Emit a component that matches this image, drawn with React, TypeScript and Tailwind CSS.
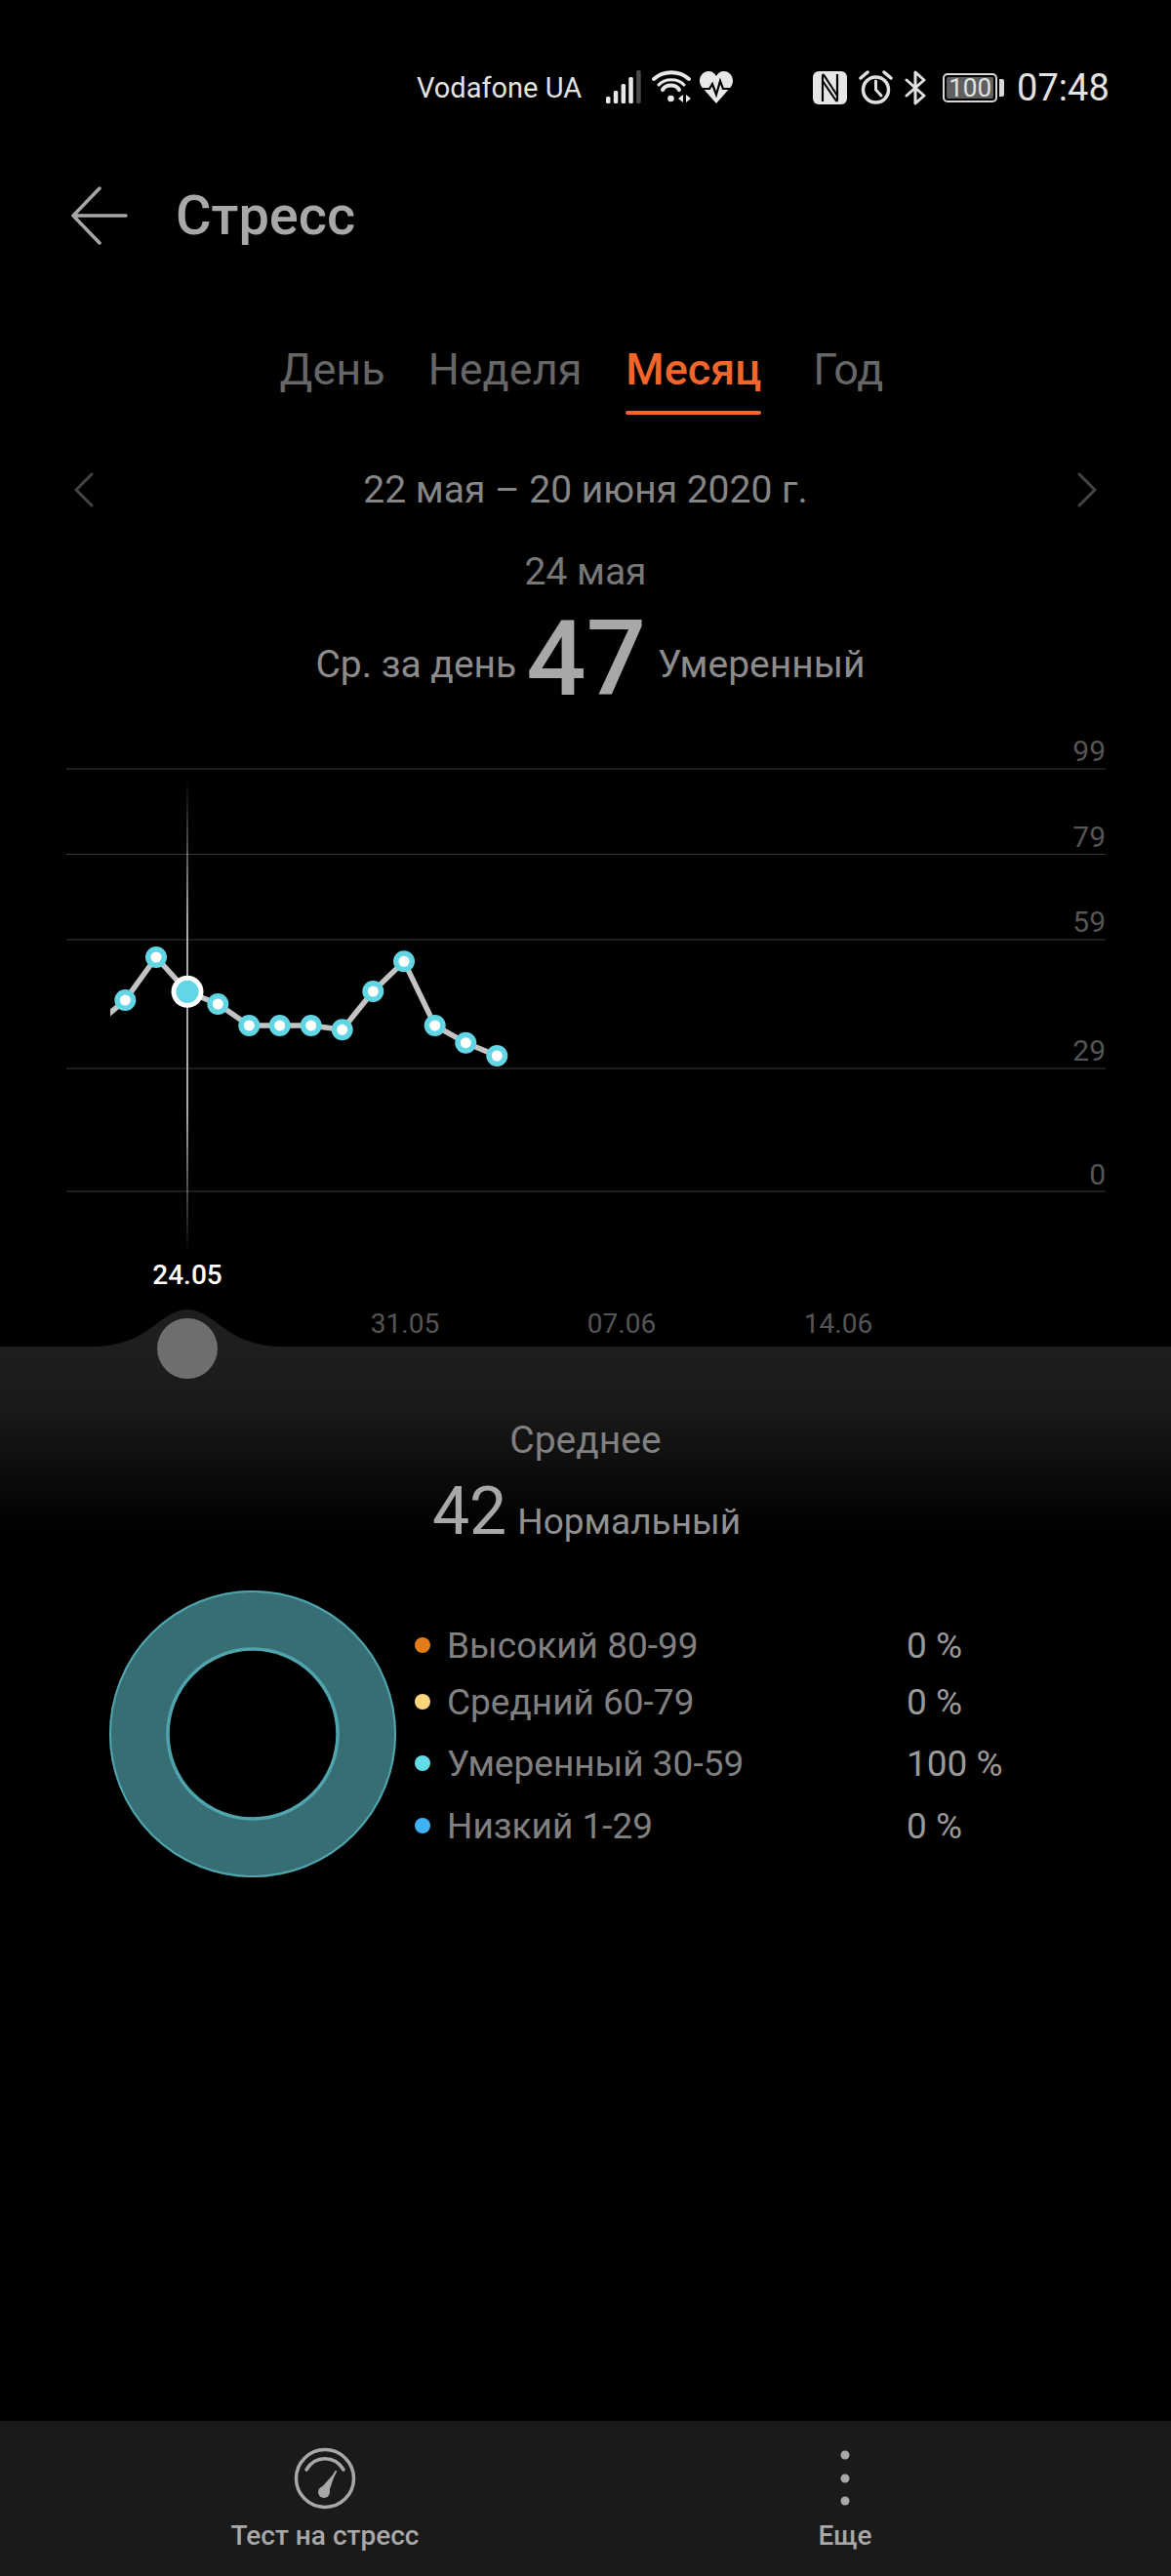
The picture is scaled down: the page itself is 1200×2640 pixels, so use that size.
const points: [number, number][] = [
  [128.3, 1025], [160, 981], [192, 1016.3], [223.3, 1029], [255.3, 1051], [286.7, 1051], [318.7, 1051],
  [350.7, 1055.3], [382.3, 1016], [414, 985.3], [445.7, 1051], [477.3, 1068.7], [509.3, 1082],
];

const gridLines: { y: number; label: string; labelY: number }[] = [
  { y: 788, label: "99", labelY: 780 },
  { y: 875.5, label: "79", labelY: 868 },
  { y: 963, label: "59", labelY: 955 },
  { y: 1095, label: "29", labelY: 1087 },
  { y: 1221, label: "0", labelY: 1214 },
];

const legend = [
  { name: "Высокий 80-99", value: "0 %", dot: "bg-[#e47d17]", row: "h-[54px]" },
  { name: "Средний 60-79", value: "0 %", dot: "bg-[#ffd67c]", row: "h-[62px]" },
  { name: "Умеренный 30-59", value: "100 %", dot: "bg-[#62dce8]", row: "h-[64px]" },
  { name: "Низкий 1-29", value: "0 %", dot: "bg-[#3db3f5]", row: "h-[64px]" },
];

function StatusIcons() {
  return (
    <div className="flex items-center">
      <svg width="37" height="36" viewBox="0 0 37 36" className="ml-[24px]" fill="#e8e8e8">
        <rect x="1" y="27" width="4.500" height="7" rx="1.500" />
        <rect x="8.800" y="21" width="4.500" height="13" rx="1.500" />
        <rect x="16.600" y="14" width="4.500" height="20" rx="1.500" />
        <rect x="24.300" y="7" width="4.500" height="27" rx="1.500" />
        <rect x="32.200" y="0" width="4.500" height="34" rx="1.500" fill="#4a4a4a" />
      </svg>
      <svg width="42" height="36" viewBox="0 0 42 36" className="ml-[10px]" fill="none" stroke="#e8e8e8" strokeLinecap="round">
        <path d="M3 9C13 0 29 0 39 9" strokeWidth="4" />
        <path d="M12 20C15 14 26 14 29 20" strokeWidth="4" />
        <path d="M8 15C14 8 28 8 34 15" strokeWidth="3" />
        <circle cx="20.500" cy="29" r="3.300" fill="#e8e8e8" stroke="none" />
        <path d="M33 25V33L28 29Z" fill="#e8e8e8" stroke="none" />
        <path d="M36 25V33L41 29Z" fill="#e8e8e8" stroke="none" />
      </svg>
      <svg width="36" height="34" viewBox="0 0 36 34" className="ml-[7px]">
        <path
          d="M18 33L3 16C-2 9 3 0 10 0C14 0 16.5 2 18 5C19.500 2 22 0 26 0C33 0 38 9 33 16Z"
          fill="#e8e8e8"
        />
        <path d="M0 18H11L14 13L18 24L22 10L25 18H36" fill="none" stroke="#000" strokeWidth="2.200" />
      </svg>
      {/* NFC mark: rounded plate cut by an N-shaped pair of hairlines */}
      <svg width="35" height="34" viewBox="0 0 35 34" className="ml-[81px]">
        <rect width="35" height="34" rx="6" fill="#e6e6e6" />
        <path d="M10 31V5Q10 2 12 5L25 25" fill="none" stroke="#000" strokeWidth="2.200" />
        <path d="M25 3V29Q25 32 23 29L10 10" fill="none" stroke="#000" strokeWidth="2.200" />
      </svg>
      <svg width="35" height="36" viewBox="0 0 35 36" className="ml-[12px]" fill="none" stroke="#e0e0e0" strokeLinecap="round">
        <circle cx="17.500" cy="20" r="13" strokeWidth="3.500" />
        <path d="M17.500 11V20L23 26" strokeWidth="3" />
        <path d="M2 8L9 2M33 8L26 2" strokeWidth="3.500" />
      </svg>
      <svg width="23" height="36" viewBox="0 0 23 36" className="ml-[12px]" fill="none" stroke="#e0e0e0" strokeWidth="3" strokeLinecap="round" strokeLinejoin="round">
        <path d="M2 10L20 26L11 34V2L20 10L2 26" />
      </svg>
      <div className="ml-[16px] flex items-center">
        <div className="h-[30px] w-[56px] rounded-[5px] border-2 border-[#d8d8d8] p-[2px]">
          <div className="flex h-full w-full items-center justify-center rounded-[2px] bg-[#5f5f5f] text-[26px] leading-none text-[#e2e2e2]">
            100
          </div>
        </div>
        <div className="ml-[2px] h-[18px] w-[5px] rounded-r-[2px] bg-[#d8d8d8]" />
      </div>
    </div>
  );
}

function StatusBar() {
  return (
    <div className="flex h-[108px] items-end pl-[427px] text-[#e2e2e2]">
      <div className="flex h-[36px] items-center">
        <span className="text-[29px] leading-none">Vodafone UA</span>
        <StatusIcons />
        <span className="ml-[13px] text-[38px] leading-none">07:48</span>
      </div>
    </div>
  );
}

function Chart() {
  const linePath = `M100 1049L${points.map(([x, y]) => `${x} ${y}`).join("L")}`;
  return (
    <svg width="1200" height="640" viewBox="0 740 1200 640" className="relative z-10 block overflow-visible">
      <defs>
        <linearGradient id="cursorFade" x1="0" y1="800" x2="0" y2="1285" gradientUnits="userSpaceOnUse">
          <stop offset="0" stopColor="#aaa" stopOpacity="0" />
          <stop offset="0.3" stopColor="#aaa" />
          <stop offset="0.7" stopColor="#aaa" />
          <stop offset="1" stopColor="#aaa" stopOpacity="0" />
        </linearGradient>
        <clipPath id="plotArea">
          <rect x="113" y="780" width="1020" height="440" />
        </clipPath>
      </defs>
      {gridLines.map((g) => (
        <g key={g.label}>
          <line x1="68" x2="1133" y1={g.y} y2={g.y} stroke="#3a3a3a" strokeWidth="1.2" />
          <text x="1133" y={g.labelY} textAnchor="end" fontSize="30" fill="#555">{g.label}</text>
        </g>
      ))}
      <rect x="191" y="800" width="2" height="485" fill="url(#cursorFade)" />
      <path d={linePath} fill="none" stroke="#c4c4c4" strokeWidth="5.500" clipPath="url(#plotArea)" />
      {points.map(([x, y], i) =>
        i === 2 ? (
          <g key={x}>
            <circle cx={x} cy={y} r="16.500" fill="#fff" />
            <circle cx={x} cy={y} r="11.500" fill="#62d6e4" />
          </g>
        ) : (
          <g key={x}>
            <circle cx={x} cy={y} r="11" fill="#62d6e4" />
            <circle cx={x} cy={y} r="5.500" fill="#fff" />
          </g>
        ),
      )}
      <text x="192" y="1316" textAnchor="middle" fontSize="28" fontWeight="500" fill="#fff">24.05</text>
      <text x="415" y="1366" textAnchor="middle" fontSize="28" fill="#555">31.05</text>
      <text x="637" y="1366" textAnchor="middle" fontSize="28" fill="#555">07.06</text>
      <text x="859" y="1366" textAnchor="middle" fontSize="28" fill="#555">14.06</text>
      <path
        d="M100 1380C130 1378 146 1368 160 1357C174 1346 184 1342 192 1342C200 1342 210 1346 224 1357C238 1368 254 1378 285 1380Z"
        fill="#1e1e1e"
      />
      <circle cx="192" cy="1382" r="31" fill="#6e6e6e" />
    </svg>
  );
}

function Donut() {
  return (
    <svg width="296" height="296" viewBox="0 0 296 296" className="shrink-0">
      <circle cx="148" cy="148" r="117" fill="none" stroke="#376e73" strokeWidth="60" />
      <circle cx="148" cy="148" r="146" fill="none" stroke="#4fa5ad" strokeWidth="2" />
      <circle cx="148" cy="148" r="87" fill="none" stroke="#4fa5ad" strokeWidth="3.500" />
    </svg>
  );
}

export default function App() {
  return (
    <div className="relative flex h-[2640px] w-[1200px] flex-col overflow-hidden bg-black font-['Roboto',sans-serif]">
      <StatusBar />

      {/* Title bar */}
      <div className="mt-[63px] flex h-[100px] items-center pl-[73px]">
        <svg width="58" height="60" viewBox="0 0 58 60" fill="none" stroke="#a6a6a6" strokeWidth="3.500" strokeLinecap="round" strokeLinejoin="round">
          <path d="M56 30H2M29 2L2 30L29 58" />
        </svg>
        <span className="ml-[49px] text-[56px] leading-none font-medium text-[#a8a8a8]">Стресс</span>
      </div>

      {/* Period tabs */}
      <div className="mt-[78px] flex h-[76px] items-start justify-center text-[45px] leading-[60px] text-[#666]">
        <span className="ml-[-8px]">День</span>
        <span className="ml-[44px]">Неделя</span>
        <span className="ml-[45px] flex flex-col items-center">
          <span className="font-medium text-[#f2652b]">Месяц</span>
          <span className="mt-[12px] h-[4px] w-full rounded-full bg-[#f2652b]" />
        </span>
        <span className="ml-[53px]">Год</span>
      </div>

      {/* Date range */}
      <div className="mt-[51px] flex h-[52px] items-center justify-between px-[76px] text-[39px] leading-none text-[#858585]">
        <svg width="20" height="36" viewBox="0 0 20 36" fill="none" stroke="#444" strokeWidth="3" strokeLinecap="round" strokeLinejoin="round">
          <path d="M18 2L2 18L18 34" />
        </svg>
        <span>22 мая – 20 июня 2020 г.</span>
        <svg width="20" height="36" viewBox="0 0 20 36" fill="none" stroke="#444" strokeWidth="3" strokeLinecap="round" strokeLinejoin="round">
          <path d="M2 2L18 18L2 34" />
        </svg>
      </div>

      {/* Selected day summary */}
      <div className="mt-[36px] text-center text-[39px] leading-[44px] text-[#777]">24 мая</div>
      <div className="mt-[17px] flex h-[100px] items-end justify-center pl-[10px] text-[39px] leading-[44px] text-[#8c8c8c]">
        <span className="mb-[22px]">Ср. за день</span>
        <span className="mr-[12px] ml-[10px] text-[108px] leading-[100px] font-medium text-[#a8a8a8]">47</span>
        <span className="mb-[22px]">Умеренный</span>
      </div>

      <div className="mt-[15px]">
        <Chart />
      </div>

      {/* Averages panel */}
      <div className="flex flex-1 flex-col bg-[linear-gradient(180deg,#1e1e1e_0px,#1a1a1a_60px,#000_190px)]">
        <div className="mt-[72px] text-center text-[39px] leading-[48px] text-[#808080]">Среднее</div>
        <div className="mt-[14px] flex items-baseline justify-center pl-[2px] text-[#a8a8a8]">
          <span className="text-[68px] leading-[70px]">42</span>
          <span className="ml-[11px] text-[37px] leading-[44px] text-[#909090]">Нормальный</span>
        </div>

        <div className="mt-[45px] flex items-center pl-[111px]">
          <Donut />
          <div className="mt-[8px] ml-[18px] flex w-[740px] flex-col text-[37px] text-[#808080]">
            {legend.map((item) => (
              <div key={item.name} className={`flex items-center ${item.row}`}>
                <span className={`h-[16px] w-[16px] rounded-full ${item.dot}`} />
                <span className="ml-[17px] w-[471px] leading-none">{item.name}</span>
                <span className="leading-none text-[#999]">{item.value}</span>
              </div>
            ))}
          </div>
        </div>

        {/* Bottom actions */}
        <div className="mt-auto flex h-[159px] bg-[#1a1a1a] text-[28px] font-medium text-[#a8a8a8]">
          <div className="ml-[233px] flex w-[200px] flex-col items-center pt-[27px]">
            <svg width="64" height="64" viewBox="0 0 64 64" fill="none" stroke="#a8a8a8" strokeLinecap="round">
              <circle cx="32" cy="32" r="29.500" strokeWidth="3.500" />
              <path d="M13 23C22 8 42 8 51 23" strokeWidth="3.500" />
              <path d="M43 25L33 44" strokeWidth="2" />
              <path d="M43 25L36 46L27 43Z" fill="#a8a8a8" stroke="none" />
              <circle cx="31" cy="46" r="6" fill="#a8a8a8" stroke="none" />
            </svg>
            <span className="mt-[7px] leading-[40px] whitespace-nowrap">Тест на стресс</span>
          </div>
          <div className="ml-[383px] flex w-[100px] flex-col items-center pt-[27px]">
            <svg width="10" height="64" viewBox="0 0 10 64" fill="#a8a8a8">
              <circle cx="5" cy="8" r="4.500" />
              <circle cx="5" cy="32" r="4.500" />
              <circle cx="5" cy="55" r="4.500" />
            </svg>
            <span className="mt-[7px] leading-[40px]">Еще</span>
          </div>
        </div>
      </div>
    </div>
  );
}
